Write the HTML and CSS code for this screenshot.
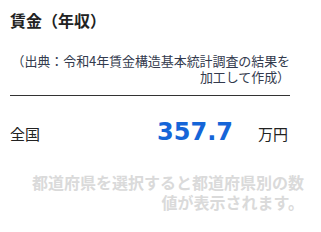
FILE: index.html
```html
<!DOCTYPE html>
<html lang="ja">
<head>
<meta charset="utf-8">
<link rel="stylesheet" href="styles.css">
</head>
<body>
<div class="panel">
  <h2 class="title">賃金（年収）</h2>
  <p class="source">（出典：令和4年賃金構造基本統計調査の結果を加工して作成）</p>
  <div class="row">
    <span class="area">全国</span>
    <span class="value">357.7</span>
    <span class="unit">万円</span>
  </div>
</div>
<p class="note">都道府県を選択すると都道府県別の数値が表示されます。</p>
</body>
</html>
```
FILE: styles.css
```css
html, body {
  margin: 0;
  padding: 0;
  background: #fff;
}
body {
  font-family: "Noto Sans CJK JP", "Noto Sans", sans-serif;
  width: 321px;
  height: 232px;
  overflow: hidden;
}
.panel {
  width: 280px;
  margin-left: 10px;
}
.title {
  margin: 0;
  padding-top: 8px;
  font-size: 16px;
  line-height: 24px;
  font-weight: 700;
  color: #222;
}
.source {
  margin: 21px 0 0;
  padding-bottom: 10px;
  border-bottom: 1px solid #333;
  text-align: right;
  font-size: 13px;
  line-height: 16px;
  letter-spacing: -0.08px;
  color: #333a4d;
}
.row {
  display: flex;
  align-items: baseline;
  margin-top: 22px;
}
.area {
  font-size: 15px;
  color: #222;
}
.value {
  margin-left: auto;
  font-family: "DejaVu Sans", sans-serif;
  font-size: 24px;
  font-weight: 700;
  color: #1565d8;
}
.unit {
  margin-left: 25px;
  margin-right: 2px;
  font-size: 15px;
  color: #222;
}
.note {
  margin: 26px 17px 0 24px;
  text-align: right;
  font-size: 16px;
  line-height: 20px;
  font-weight: 700;
  color: #dadada;
}
```
